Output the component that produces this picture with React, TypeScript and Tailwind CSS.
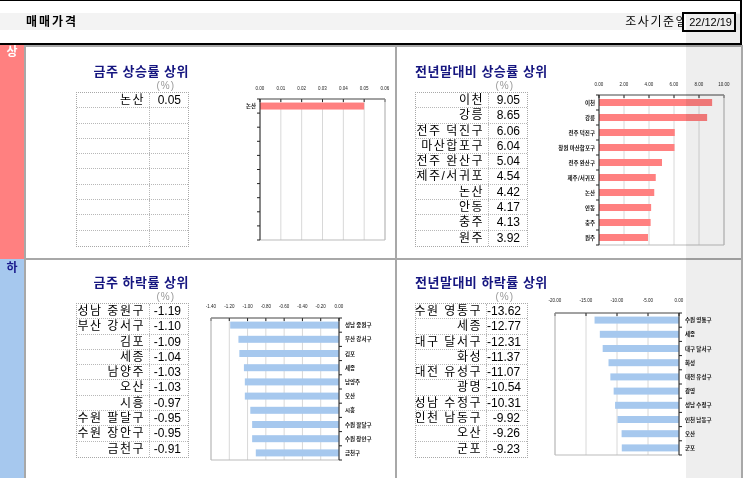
import React from "react";

type Row = [string, number];

const F = { fontFamily: '"Liberation Sans","Noto Sans CJK KR",sans-serif' };

function Table({ rows, valW }: { rows: Row[]; valW: number }) {
  const all = [...rows];
  while (all.length < 10) all.push(["", NaN]);
  return (
    <div className="w-[113px] border border-dotted border-[#a8a8a8]">
      {all.map((r, i) => (
        <div key={i} className="flex h-[15.3px] border-b border-dotted border-[#b8b8b8] last:border-b-0 text-[12px] leading-[15px] text-black">
          <div className="flex-1 min-w-0 flex justify-end overflow-hidden pr-[4px] border-r border-dotted border-[#b8b8b8]">
            <span className="whitespace-nowrap tracking-[1.5px] shrink-0">{r[0]}</span>
          </div>
          <div style={{ width: valW }} className="text-right pr-[7px] tracking-[0px]">{isNaN(r[1]) ? "" : r[1].toFixed(2)}</div>
        </div>
      ))}
    </div>
  );
}

function Chart(p: {
  w: number; h: number; px: number; py: number; pw: number; ph: number;
  ticks: number[]; min: number; max: number; data: Row[]; color: string; neg?: boolean; tickY: number;
}) {
  const sx = (v: number) => p.px + ((v - p.min) / (p.max - p.min)) * p.pw;
  const step = p.ph / 10;
  return (
    <svg width={p.w} height={p.h} style={{ display: "block" }}>
      {p.ticks.map((t, i) => (
        <g key={i}>
          <text x={sx(t)} y={p.tickY} fontSize="4.5" textAnchor="middle" fill="#222" fontFamily="Liberation Sans">{t.toFixed(2)}</text>
          <line x1={sx(t)} x2={sx(t)} y1={p.py} y2={p.py + p.ph} stroke="#d8d8d8" strokeWidth="1" />
          <line x1={sx(t)} x2={sx(t)} y1={p.py} y2={p.py + 3} stroke="#222" strokeWidth="1" />
        </g>
      ))}
      {p.data.map((d, i) => {
        const cy = p.py + step * (i + 0.5);
        const a = sx(0), b = sx(d[1]);
        return (
          <g key={i}>
            <rect x={Math.min(a, b)} y={cy - 3.5} width={Math.abs(b - a)} height={7} fill={p.color} />
            <text x={p.neg ? p.px + p.pw + 6 : p.px - 4} y={cy + 2} fontSize="5.5" fontWeight="bold" textAnchor={p.neg ? "start" : "end"} fill="#111" fontFamily="Noto Sans CJK KR">{d[0]}</text>
          </g>
        );
      })}
      {Array.from({ length: 11 }).map((_, i) => {
        const y = p.py + step * i;
        const x = p.neg ? p.px + p.pw : p.px;
        return <line key={i} x1={x} x2={p.neg ? x + 3 : x - 3} y1={y} y2={y} stroke="#222" />;
      })}
      <line x1={p.px} x2={p.px + p.pw} y1={p.py} y2={p.py} stroke="#444" />
      <line x1={p.px} x2={p.px + p.pw} y1={p.py + p.ph} y2={p.py + p.ph} stroke="#bbb" />
      <line x1={p.neg ? p.px + p.pw : p.px} x2={p.neg ? p.px + p.pw : p.px} y1={p.py} y2={p.py + p.ph} stroke="#222" />
      <line x1={p.neg ? p.px : p.px + p.pw} x2={p.neg ? p.px : p.px + p.pw} y1={p.py} y2={p.py + p.ph} stroke="#bbb" />
    </svg>
  );
}

function Head({ title, right }: { title: string; right?: boolean }) {
  return (
    <>
      <div className={`h-[16px] text-[13px] leading-[16px] font-bold text-[#161680] whitespace-nowrap tracking-[0.5px] ${right ? "text-right" : ""}`}>{title}</div>
      <div className="h-[12px] text-[10px] leading-[12px] text-[#999] text-right pr-[14px] tracking-[1px]">(%)</div>
    </>
  );
}

const wUp: Row[] = [["논산", 0.05]];
const yUp: Row[] = [["이천", 9.05], ["강릉", 8.65], ["전주 덕진구", 6.06], ["창원 마산합포구", 6.04], ["전주 완산구", 5.04], ["제주/서귀포", 4.54], ["논산", 4.42], ["안동", 4.17], ["충주", 4.13], ["원주", 3.92]];
const wDn: Row[] = [["성남 중원구", -1.19], ["부산 강서구", -1.1], ["김포", -1.09], ["세종", -1.04], ["남양주", -1.03], ["오산", -1.03], ["시흥", -0.97], ["수원 팔달구", -0.95], ["수원 장안구", -0.95], ["금천구", -0.91]];
const yDn: Row[] = [["수원 영통구", -13.62], ["세종", -12.77], ["대구 달서구", -12.31], ["화성", -11.37], ["대전 유성구", -11.07], ["광명", -10.54], ["성남 수정구", -10.31], ["인천 남동구", -9.92], ["오산", -9.26], ["군포", -9.23]];

export default function App() {
  return (
    <div style={F} className="relative w-[743px] h-[478px] bg-white overflow-hidden">
      <div className="h-[45px] border-t border-b-2 border-r-2 border-black w-[742px] pt-[12px]">
        <div className="h-[17px] bg-[#f3f3f3] flex items-center">
          <div className="ml-[26px] text-[12px] font-bold text-black tracking-[2px]">매매가격</div>
          <div className="ml-auto text-[12px] text-black tracking-[1.5px] -mr-[6px]">조사기준일</div>
          <div className="relative mr-[4px] w-[54px] h-[20px] border-2 border-black bg-white text-[11px] leading-[16px] text-right pr-[2px]">22/12/19</div>
        </div>
      </div>
      <div className="flex">
        <div className="w-[24px] flex flex-col">
          <div className="h-[214px] bg-[#ff8080] text-white font-bold text-[12px] text-center leading-[14px]">상</div>
          <div className="h-[219px] bg-[#a6c8ee] text-[#1a1a8c] font-bold text-[12px] text-center leading-[18px]">하</div>
        </div>
        <div className="grid grid-cols-[369px_344px] grid-rows-[211px_218px] gap-[2px] bg-[#a8a8a8] border-2 border-[#a8a8a8] w-[719px]">
          <div className="bg-white flex items-start">
            <div className="ml-[50px] pt-[17px] w-[113px]">
              <div className="-ml-[40px]"><Head title="금주 상승률 상위" right /></div>
              <Table rows={wUp} valW={38} />
            </div>
            <div className="ml-[46px] mt-[37px]">
              <Chart w={160} h={160} px={25} py={15} pw={125} ph={141} ticks={[0, 0.01, 0.02, 0.03, 0.04, 0.05, 0.06]} min={0} max={0.06} data={wUp} color="#ff8080" tickY={6} />
            </div>
          </div>
          <div className="bg-white flex items-start">
            <div className="ml-[18px] pt-[17px] w-[113px]">
              <Head title="전년말대비 상승률 상위" />
              <Table rows={yUp} valW={38} />
            </div>
            <div className="ml-[6px] mt-[33px]">
              <Chart w={200} h={172} px={65} py={15} pw={125} ph={150} ticks={[0, 2, 4, 6, 8, 10]} min={0} max={10} data={yUp} color="#ff8080" tickY={6} />
            </div>
          </div>
          <div className="bg-white flex items-start">
            <div className="ml-[50px] pt-[15px] w-[113px]">
              <div className="-ml-[40px]"><Head title="금주 하락률 상위" right /></div>
              <Table rows={wDn} valW={38} />
            </div>
            <div className="ml-[15px] mt-[40px]">
              <Chart w={190} h={170} px={7} py={18} pw={128} ph={142} ticks={[-1.4, -1.2, -1, -0.8, -0.6, -0.4, -0.2, 0]} min={-1.4} max={0} data={wDn} color="#a6c8ee" neg tickY={8} />
            </div>
          </div>
          <div className="bg-white flex items-start">
            <div className="ml-[18px] pt-[15px] w-[113px]">
              <Head title="전년말대비 하락률 상위" />
              <Table rows={yDn} valW={40} />
            </div>
            <div className="ml-[19px] mt-[36px]">
              <Chart w={194} h={170} px={8} py={17} pw={124} ph={142} ticks={[-20, -15, -10, -5, 0]} min={-20} max={0} data={yDn} color="#a6c8ee" neg tickY={6} />
            </div>
          </div>
        </div>
      </div>
      <div className="absolute left-[686px] top-[14px] w-[55px] h-[464px] bg-[#eeeeee] mix-blend-multiply pointer-events-none" />
    </div>
  );
}
